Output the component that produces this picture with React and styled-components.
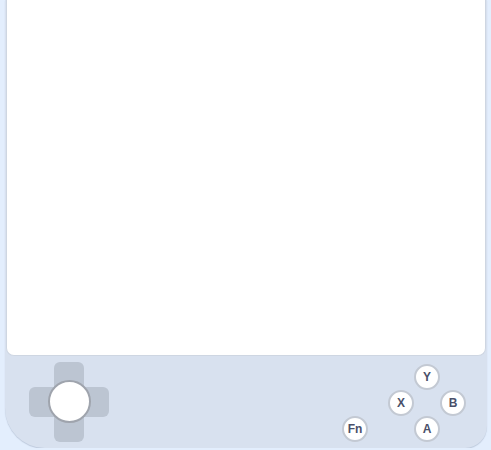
import React from "react";
import styled, { createGlobalStyle } from "styled-components";

const GlobalStyle = createGlobalStyle`
  html, body {
    margin: 0;
    padding: 0;
    background: #e3eefd;
    font-family: "Liberation Sans", Arial, sans-serif;
  }
`;

const Device = styled.div`
  margin-left: 5px;
  width: 482px;
  height: 448px;
  background: #d8e1ef;
  border-radius: 0 0 22px 40px;
  box-shadow: 0 1px 1px rgba(120, 135, 160, 0.35);
  display: flex;
  flex-direction: column;
`;

const Screen = styled.div`
  margin: 0 1px;
  height: 355px;
  background: #ffffff;
  border: 1px solid #ced6e2;
  border-top: none;
  border-radius: 0 0 8px 8px;
`;

const Controls = styled.div`
  display: flex;
  align-items: flex-end;
  padding: 6px 21px 0 24px;
`;

const DPad = styled.div`
  position: relative;
  width: 80px;
  height: 80px;
`;

const Bar = styled.div`
  position: absolute;
  background: #bcc5d2;
  border-radius: 6px;
  ${(p) =>
    p.$vertical
      ? "left: 25px; top: 0; width: 30px; height: 80px;"
      : "left: 0; top: 25px; width: 80px; height: 30px;"}
`;

const Stick = styled.div`
  position: absolute;
  left: 19px;
  top: 18px;
  width: 39px;
  height: 39px;
  border-radius: 50%;
  background: #ffffff;
  border: 2px solid #9fa4ad;
`;

const RightCluster = styled.div`
  margin-left: auto;
  display: flex;
  align-items: flex-end;
  gap: 20px;
`;

const FaceGrid = styled.div`
  display: grid;
  grid-template-columns: repeat(3, 26px);
  grid-template-rows: repeat(3, 26px);
`;

const RoundButton = styled.div`
  width: 26px;
  height: 26px;
  box-sizing: border-box;
  border-radius: 50%;
  background: #ffffff;
  border: 2px solid #c3c9d3;
  display: flex;
  align-items: center;
  justify-content: center;
  font-size: 12px;
  font-weight: bold;
  color: #4a506a;
  grid-column: ${(p) => p.$col || "auto"};
  grid-row: ${(p) => p.$row || "auto"};
`;

export default function App() {
  return (
    <>
      <GlobalStyle />
      <Device>
        <Screen />
        <Controls>
          <DPad>
            <Bar $vertical />
            <Bar />
            <Stick />
          </DPad>
          <RightCluster>
            <RoundButton>Fn</RoundButton>
            <FaceGrid>
              <RoundButton $col={2} $row={1}>Y</RoundButton>
              <RoundButton $col={1} $row={2}>X</RoundButton>
              <RoundButton $col={3} $row={2}>B</RoundButton>
              <RoundButton $col={2} $row={3}>A</RoundButton>
            </FaceGrid>
          </RightCluster>
        </Controls>
      </Device>
    </>
  );
}
